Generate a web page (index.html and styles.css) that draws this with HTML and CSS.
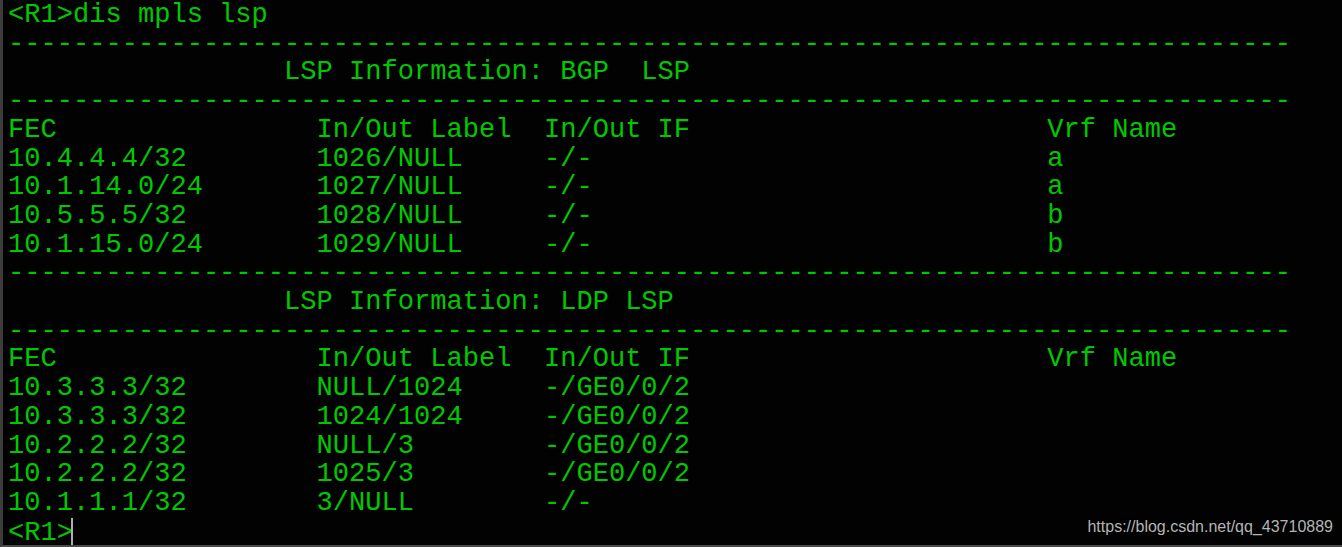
FILE: index.html
```html
<!DOCTYPE html>
<html>
<head>
<meta charset="utf-8">
<link rel="stylesheet" href="styles.css">
</head>
<body>
<div class="term">
<pre class="out">&lt;R1&gt;dis mpls lsp
-------------------------------------------------------------------------------
                 LSP Information: BGP  LSP
-------------------------------------------------------------------------------
FEC                In/Out Label  In/Out IF                      Vrf Name
10.4.4.4/32        1026/NULL     -/-                            a
10.1.14.0/24       1027/NULL     -/-                            a
10.5.5.5/32        1028/NULL     -/-                            b
10.1.15.0/24       1029/NULL     -/-                            b
-------------------------------------------------------------------------------
                 LSP Information: LDP LSP
-------------------------------------------------------------------------------
FEC                In/Out Label  In/Out IF                      Vrf Name
10.3.3.3/32        NULL/1024     -/GE0/0/2
10.3.3.3/32        1024/1024     -/GE0/0/2
10.2.2.2/32        NULL/3        -/GE0/0/2
10.2.2.2/32        1025/3        -/GE0/0/2
10.1.1.1/32        3/NULL        -/-
&lt;R1&gt;<span class="cursor"></span></pre>
<div class="watermark">https://blog.csdn.net/qq_43710889</div>
</div>
</body>
</html>
```
FILE: styles.css
```css
html, body {
  margin: 0;
  padding: 0;
  background: #000;
}
.term {
  position: relative;
  width: 1339px;
  height: 545px;
  background: #020202;
  border-left: 3px solid #3c3c3c;
  border-bottom: 2px solid #4a4a4a;
  overflow: hidden;
}
.out {
  margin: 0;
  padding: 1px 0 0 5px;
  font-family: "Liberation Mono", "Courier New", monospace;
  font-size: 27.07px;
  line-height: 28.7px;
  color: #00c800;
  white-space: pre;
}
.cursor {
  display: inline-block;
  width: 2px;
  height: 28px;
  background: #b0b0b0;
  margin-left: -2px;
  vertical-align: -6px;
}
.watermark {
  position: absolute;
  right: 9px;
  bottom: 9px;
  font-family: "Liberation Sans", Arial, sans-serif;
  font-size: 16px;
  color: #b4b4b4;
}
```
